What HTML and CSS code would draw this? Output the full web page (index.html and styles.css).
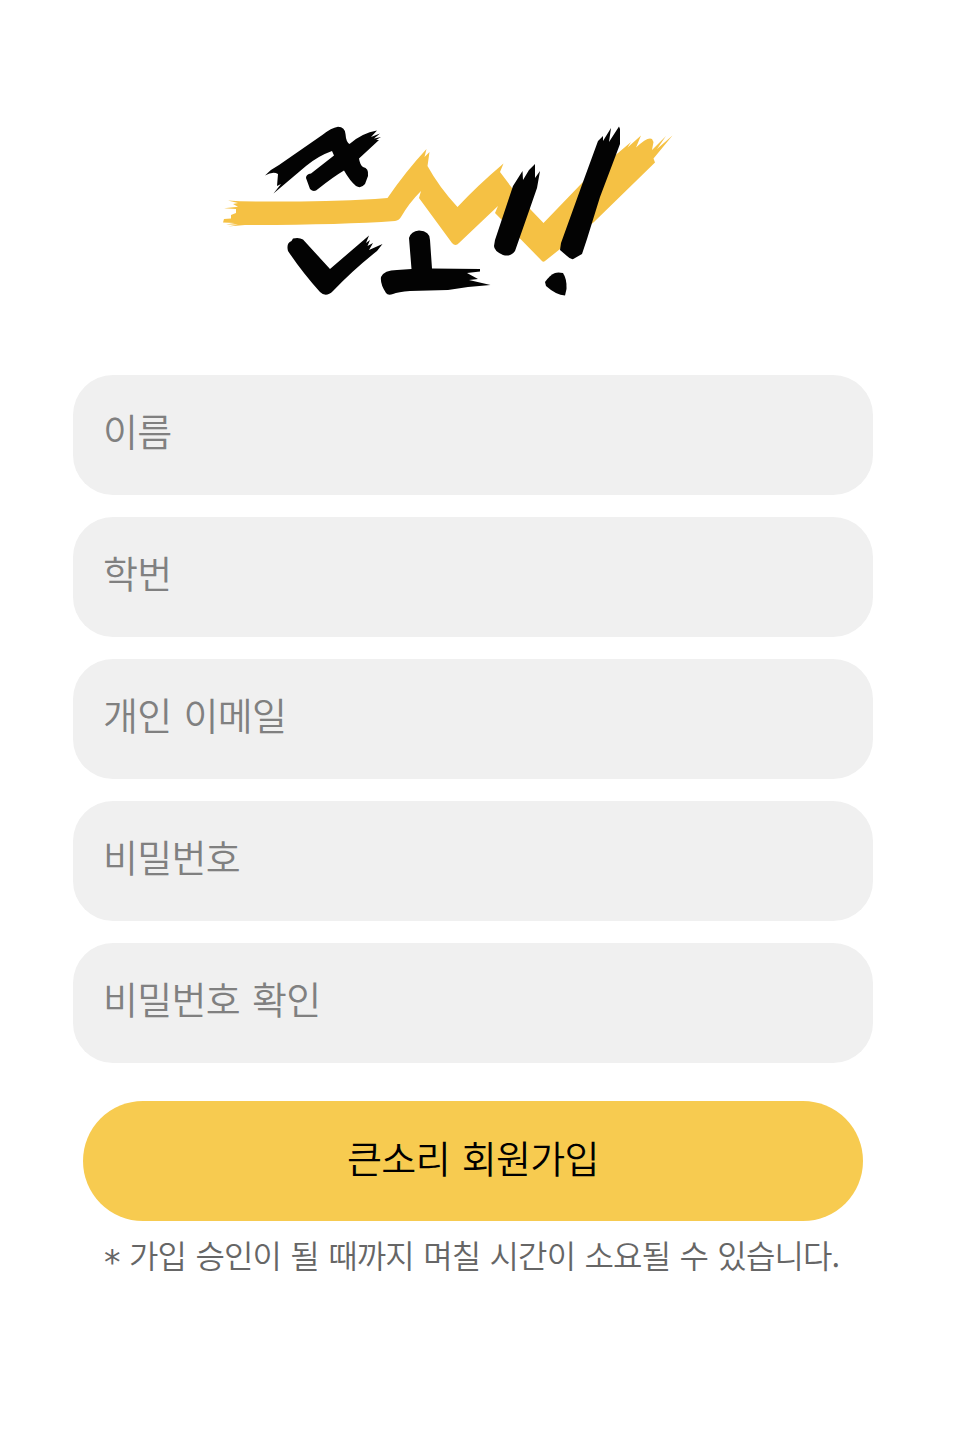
FILE: index.html
```html
<!DOCTYPE html>
<html lang="ko">
<head>
<meta charset="utf-8">
<title>큰소리 회원가입</title>
<link rel="stylesheet" href="styles.css">
</head>
<body>
<main class="signup">
  <svg class="logo" viewBox="215 115 465 190" role="img" aria-label="큰소리!">
    <g class="logo-bolt">
      <path d="M228 200.5L240 201.3Q310 202.500 375 199L387.500 198Q406 171 426.500 149L424.500 157L429.500 152L427.500 166Q439 187 457.500 207Q477 186 503.500 163.500L500 172L512 188L531 210L543.500 223L582 183L618 153L631 142L627.500 147.500L641 135.500L636 147.500Q648 136 652 139L653.500 142L652 150L666 136L657 149L672.500 135.500L653.500 158.500L655 162.500L594 222L545 261Q543 263 541 260L495 213L498 206L459 243Q455.500 247 452 243L419 198L421 191Q409 203 401 217Q399 220.500 395 221Q340 225 245 225L228 226.500L238 224.500L226 224.500L235 223L223 222.500L224 219L231 218.500L231 215L236 213L236 209L224 208.200L238 206.800L233 204L238 203L228 200.500Z"/>
    </g>
    <g class="logo-ink">
      <path d="M265 175.500Q271 169 279 165L323 134.500Q331 128 338 126.700Q345 127 345.500 134Q346 142 349.500 144Q362 133 377 130.500L371 137L380 133.500L374 138.500L381 137L376 140L379 140L359 158.500Q360 165 363 167Q369 168 368 176L365 184Q361 189 356 186Q350 181 344 170.500Q333 177 318 189Q314 193 310 189L306 178Q306 174 311 173.500L334 155.500L332 151Q318 156 306 166L273.500 193.500L281 184L277 186L278 174Q273 171 265 175.500Z"/>
      <path d="M291.500 241L293 238.500Q299 237 303 239.500L330 269L369 235.500L366 243L370 240L367.500 246L373 243L369 250L382.500 244L377 251Q353 270 333 291Q326 298 320 292Q302 272 288 251Q286 243 291.500 241Z"/>
      <path d="M409 238Q411 231 419 230.500Q430 231 430 240L432 268.500L480 269L480 271.500L467 273L478 279L469 280L490.500 285L468 287L448 290L410 291Q398 292 393 294Q388 296 386 293Q380 284 381 277Q384 270 397 270L411.500 269Z"/>
      <path d="M495 240L513 186L522.500 171L523 180L529 170L535 164L535 178L540 171L537 188L529 211L515 251Q511 257 503 255Q494 251 494 246Z"/>
      <path d="M561 243L583 182L598 141L603 136L603 141L611 128L609 142L619 126.500L620 129L620 144L614 160L600 197L587 239L582 254L575 258Q572 261 567 256L560 250Z"/>
      <path d="M545 282Q550 275 555 273Q558 272 563 273Q567 279 566.500 289L565 295.500Q556 295 546 286Z"/>
    </g>
  </svg>
  <form class="form">
    <input class="field" type="text" placeholder="이름" aria-label="이름">
    <input class="field" type="text" placeholder="학번" aria-label="학번">
    <input class="field" type="email" placeholder="개인 이메일" aria-label="개인 이메일">
    <input class="field" type="password" placeholder="비밀번호" aria-label="비밀번호">
    <input class="field" type="password" placeholder="비밀번호 확인" aria-label="비밀번호 확인">
    <button class="submit" type="button">큰소리 회원가입</button>
    <p class="notice"><span class="mark">*</span><span>가입 승인이 될 때까지 며칠 시간이 소요될 수 있습니다.</span></p>
  </form>
</main>
</body>
</html>
```
FILE: styles.css
```css
* { box-sizing: border-box; }
body {
  margin: 0;
  background: #fff;
  font-family: "Noto Sans CJK KR", sans-serif;
  font-weight: 350;
}
.signup {
  width: 962px;
  height: 1444px;
  padding: 115px 89px 0 73px;
}
.logo {
  display: block;
  width: 465px;
  height: 190px;
  margin-left: 142px;
}
.logo-bolt { fill: #f5c144; }
.logo-ink { fill: #030303; }
.form {
  display: flex;
  flex-direction: column;
  gap: 22px;
  margin-top: 70px;
}
.field {
  width: 800px;
  height: 120px;
  padding: 0 30px 11px;
  border: 0;
  border-radius: 40px;
  background: #f0f0f0;
  font: inherit;
  font-size: 38px;
  letter-spacing: -0.7px;
  word-spacing: 2px;
}
.field::placeholder { color: #808080; opacity: 1; }
.submit {
  width: 780px;
  height: 120px;
  margin: 16px 10px 0;
  padding: 0 0 10px;
  border: 0;
  border-radius: 60px;
  background: #f7cb50;
  color: #000;
  font: inherit;
  font-size: 38px;
  letter-spacing: -0.7px;
  word-spacing: 2px;
}
.notice {
  display: flex;
  align-items: flex-start;
  height: 48px;
  margin: -13px 0 0 31px;
  color: #666;
  font-size: 32px;
  line-height: 48px;
  white-space: nowrap;
  letter-spacing: -0.88px;
  word-spacing: 1.2px;
}
.mark {
  width: 25px;
  padding-top: 12px;
  font-family: "DejaVu Sans", sans-serif;
  font-size: 33px;
  font-weight: 400;
  line-height: 41px;
}
```
